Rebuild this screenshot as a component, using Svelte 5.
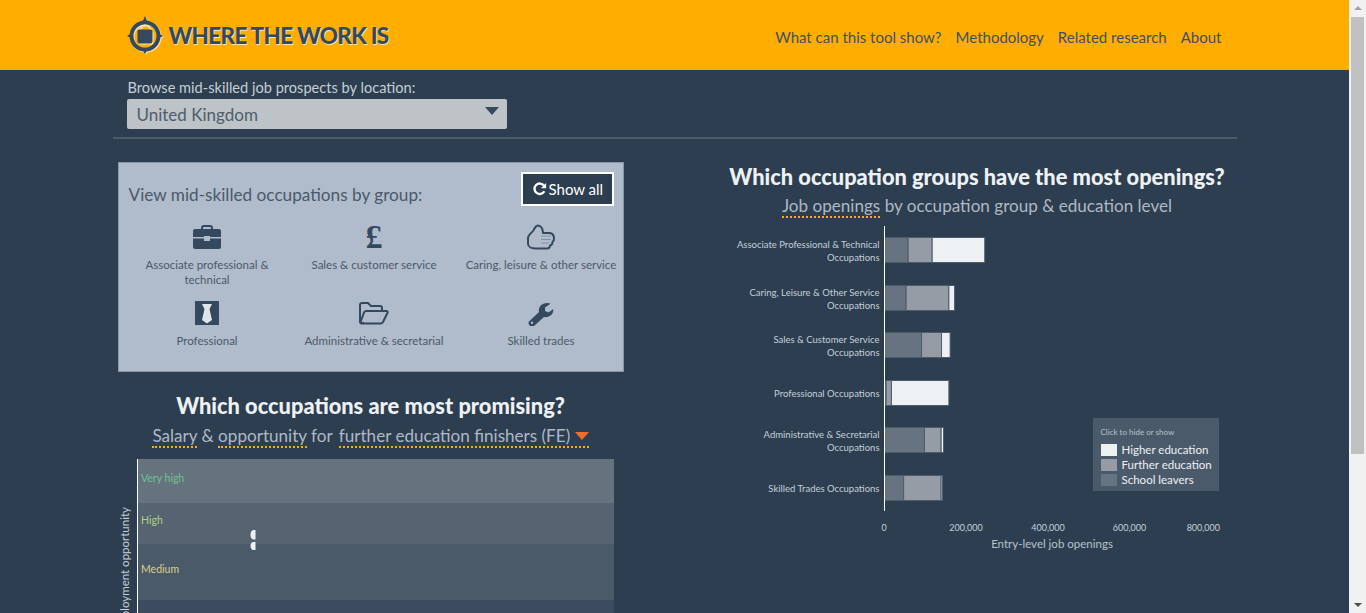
<script>
  const navLinks = ['What can this tool show?', 'Methodology', 'Related research', 'About'];

  const groups = [
    { id: 'briefcase', label: 'Associate professional & technical' },
    { id: 'pound', label: 'Sales & customer service' },
    { id: 'hand', label: 'Caring, leisure & other service' },
    { id: 'tie', label: 'Professional' },
    { id: 'folder', label: 'Administrative & secretarial' },
    { id: 'wrench', label: 'Skilled trades' }
  ];

  // values in thousands of openings, read off the axis
  const bars = [
    { lines: ['Associate Professional & Technical', 'Occupations'], y: 238, v: [58, 59, 129] },
    { lines: ['Caring, Leisure & Other Service', 'Occupations'], y: 286, v: [53, 105, 14] },
    { lines: ['Sales & Customer Service', 'Occupations'], y: 333, v: [91, 49, 21] },
    { lines: ['Professional Occupations'], y: 381, v: [4, 13, 141] },
    { lines: ['Administrative & Secretarial', 'Occupations'], y: 428, v: [98, 41, 6] },
    { lines: ['Skilled Trades Occupations'], y: 476, v: [47, 92, 3.5] }
  ];

  const segColors = ['#667380', '#959ca6', '#eef1f3'];
  const AXIS_X = 166.5;
  const SCALE = 0.4075;

  function segments(v) {
    let x = AXIS_X;
    return v.map((val, i) => {
      const seg = { x, w: val * SCALE, fill: segColors[i] };
      x += seg.w;
      return seg;
    });
  }

  const ticks = [
    { x: 166, label: '0', anchor: 'middle' },
    { x: 248, label: '200,000', anchor: 'middle' },
    { x: 330, label: '400,000', anchor: 'middle' },
    { x: 411.5, label: '600,000', anchor: 'middle' },
    { x: 502, label: '800,000', anchor: 'end' }
  ];

  const bands = [
    { y: 0, h: 44, fill: '#65737f', label: 'Very high', color: '#71c08f', ty: 23 },
    { y: 44, h: 41, fill: '#566472', label: 'High', color: '#b0cf84', ty: 65 },
    { y: 85, h: 56, fill: '#4a5a69', label: 'Medium', color: '#dcd08f', ty: 114 },
    { y: 141, h: 60, fill: '#3c4c5e', label: '', color: '', ty: 0 }
  ];

  const legend = [
    { label: 'Higher education', color: '#eef1f3' },
    { label: 'Further education', color: '#959ca6' },
    { label: 'School leavers', color: '#667380' }
  ];
</script>

<div class="window">
  <div class="page">
    <header class="topbar">
      <div class="container topbar-inner">
        <div class="brand">
          <svg class="logo" viewBox="0 0 36 38" width="36" height="38">
            <path d="M18 0l3.500 8h-7zM18 38l-3.500-6h7zM0 20l6-3.500v7zM36 20l-6-3.500v7z" fill="#34495e" />
            <circle cx="18" cy="20" r="13.500" fill="none" stroke="#34495e" stroke-width="4" />
            <path d="M12 15c1-4 3-6 6-6s5 2 6 6" fill="none" stroke="#efe7cf" stroke-width="1.200" />
            <rect x="10.500" y="13.500" width="15" height="14" rx="2" fill="#34495e" />
          </svg>
          <span class="brand-name">WHERE THE WORK IS</span>
        </div>
        <nav class="nav">
          {#each navLinks as link}
            <span>{link}</span>
          {/each}
        </nav>
      </div>
    </header>

    <div class="container">
      <section class="location">
        <div class="location-label">Browse mid-skilled job prospects by location:</div>
        <div class="select">
          <span>United Kingdom</span>
          <i class="select-caret"></i>
        </div>
      </section>
      <div class="rule"></div>

      <div class="columns">
        <div class="left">
          <section class="panel">
            <div class="panel-head">
              <h3>View mid-skilled occupations by group:</h3>
              <button class="show-all">
                <svg viewBox="0 0 16 16" width="14" height="14">
                  <path d="M13 10.600A6 6 0 1 1 12.600 4.200" fill="none" stroke="#fff" stroke-width="2.600" />
                  <path d="M15 1v6H9z" fill="#fff" />
                </svg>
                Show all
              </button>
            </div>
            <div class="groups">
              {#each groups as g}
                <div class="group">
                  <div class="group-icon">
                    {#if g.id === 'briefcase'}
                      <svg viewBox="0 0 28 24" width="28" height="24">
                        <path d="M9 5V3a2 2 0 0 1 2-2h6a2 2 0 0 1 2 2v2" fill="none" stroke="#34495e" stroke-width="2" />
                        <path d="M2 4h24a2 2 0 0 1 2 2v6H17v-1h-6v1H0V6a2 2 0 0 1 2-2z" fill="#34495e" />
                        <path d="M0 13.500h11V16h6v-2.500h11V22a2 2 0 0 1-2 2H2a2 2 0 0 1-2-2z" fill="#34495e" />
                      </svg>
                    {:else if g.id === 'pound'}
                      <span class="pound">£</span>
                    {:else if g.id === 'hand'}
                      <svg viewBox="0 0 28 26" width="28" height="26">
                        <path d="M9 24.500h11c2 0 3-1 3-3 1.500-.3 2.500-1.500 2.500-3.500 1-.8 1.500-2 1.500-3.500 0-3-1.500-5-4-5.500H16C16 5 14 1.500 11 1.500 8.500 1.500 8 4 6 7 4.500 9 1 11 1 14v6c0 3 4 4.500 8 4.500z" fill="none" stroke="#34495e" stroke-width="2" stroke-linejoin="round" />
                        <path d="M14 12h10M14 15.500h10M14 19h8" stroke="#8493a4" stroke-width="1.200" />
                      </svg>
                    {:else if g.id === 'tie'}
                      <svg viewBox="0 0 24 24" width="24" height="24">
                        <rect width="24" height="24" fill="#34495e" />
                        <path d="M7 3l10 0-2.500 5 2.500 11-5 3.500-5-3.500 2.500-11z" fill="#dfe5ea" />
                      </svg>
                    {:else if g.id === 'folder'}
                      <svg viewBox="0 0 30 23" width="30" height="23">
                        <path d="M5 21H3a2 2 0 0 1-2-2V3a2 2 0 0 1 2-2h6l3 3h9a2 2 0 0 1 2 2v3" fill="none" stroke="#34495e" stroke-width="2" />
                        <path d="M7 9h20.500c1 0 1.500 1 1 1.800L24 20a3 3 0 0 1-2.500 1.500H3c-1 0-2-.5-1.500-1.500L5 10.500A2.500 2.500 0 0 1 7 9z" fill="none" stroke="#34495e" stroke-width="2" stroke-linejoin="round" />
                      </svg>
                    {:else if g.id === 'wrench'}
                      <svg viewBox="0 0 26 25" width="26" height="25">
                        <path d="M1 20.500L11 11c-1-4 2-9 8-9 1.500 0 2.500.3 3.500.8L17 6.500v3.500l3.500 1.500 4.800-3.500c.5 5-3.800 9-9.300 8L6 25c-1.500 1-3 .8-4.300-.5C.5 23.200 0 21.800 1 20.500z" fill="#34495e" />
                        <circle cx="4" cy="21.800" r="1.200" fill="#b0bccb" />
                      </svg>
                    {/if}
                  </div>
                  <div class="group-label">{g.label}</div>
                </div>
              {/each}
            </div>
          </section>

          <h2 class="chart-title promising">Which occupations are most promising?</h2>
          <p class="chart-sub">
            <span class="dotted">Salary</span> &amp; <span class="dotted">opportunity</span> for
            <span class="dotted picker">further education finishers (FE) <i class="picker-caret"></i></span>
          </p>
          <svg class="scatter" width="501" height="201" viewBox="0 0 501 201">
            {#each bands as b}
              <rect x="24" y={b.y} width="477" height={b.h} fill={b.fill} />
              {#if b.label}
                <text x="28" y={b.ty} fill={b.color} class="band-label">{b.label}</text>
              {/if}
            {/each}
            <rect x="24" width="1" height="201" fill="#fff" />
            <text transform="translate(16 48) rotate(-90)" text-anchor="end" class="axis-title">Employment opportunity</text>
            <path d="M142.500 80.500h-2c-2 0-3-2.200-3-4.700s1-4.700 3-4.700h2z" fill="#eef1f3" />
            <path d="M142.500 91h-2c-2 0-3-2-3-4s1-4 3-4h2z" fill="#eef1f3" />
          </svg>
        </div>

        <div class="right">
          <h2 class="chart-title">Which occupation groups have the most openings?</h2>
          <p class="chart-sub">
            <span class="dotted">Job openings</span> by occupation group &amp; education level
          </p>
          <div class="bar-chart">
            <svg width="519" height="335" viewBox="0 0 519 335">
              {#each bars as row}
                {#each segments(row.v) as s}
                  <rect x={s.x} y={row.y - 226.5} width={s.w} height="25" fill={s.fill} stroke="#4d5c6c" />
                {/each}
                {#each row.lines as line, i}
                  <text
                    x="161.500"
                    y={row.y - 226 + (row.lines.length === 1 ? 16 : 10 + i * 13)}
                    text-anchor="end"
                    class="bar-label">{line}</text>
                {/each}
              {/each}
              <rect x="166" width="1" height="285" fill="#fff" />
              {#each ticks as t}
                <text x={t.x} y="305" text-anchor={t.anchor} class="tick">{t.label}</text>
              {/each}
              <text x="334" y="322" text-anchor="middle" class="x-title">Entry-level job openings</text>
            </svg>
            <div class="legend">
              <div class="legend-title">Click to hide or show</div>
              {#each legend as item}
                <div class="legend-row">
                  <i style="background: {item.color}"></i>
                  <span>{item.label}</span>
                </div>
              {/each}
            </div>
          </div>
        </div>
      </div>
    </div>
  </div>

  <div class="scrollbar">
    <i class="arrow up"></i>
    <div class="thumb"></div>
    <i class="arrow down"></i>
  </div>
</div>

<style>
  :global(body) {
    margin: 0;
    background: #2d3e50;
    overflow: hidden;
  }

  .window {
    display: flex;
    height: 613px;
    font-family: Lato, 'Noto Sans', sans-serif;
  }

  .page {
    flex: 1;
    min-width: 0;
    overflow: hidden;
    background: #2d3e50;
  }

  .container {
    width: 1124px;
    margin: 0 auto;
  }

  .topbar {
    height: 70px;
    background: #ffae00;
  }

  .topbar-inner {
    display: flex;
    align-items: center;
    justify-content: space-between;
    height: 100%;
  }

  .brand {
    display: flex;
    align-items: center;
    gap: 6px;
    margin-left: 14px;
  }

  .logo {
    filter: drop-shadow(1px 1px 0 #f4e6c4);
  }

  .brand-name {
    font-size: 22.500px;
    font-weight: 900;
    color: #34495e;
    text-shadow: 1px 1px 0 #f4e6c4;
    letter-spacing: -0.7px;
  }

  .nav {
    display: flex;
    gap: 14px;
    margin: 3px 15px 0 0;
    font-size: 15px;
    color: #3f5062;
  }

  .location {
    padding: 9px 0 0 15px;
  }

  .location-label {
    font-size: 14.600px;
    line-height: 18px;
    color: #c6ced6;
  }

  .select {
    display: flex;
    align-items: center;
    justify-content: space-between;
    box-sizing: border-box;
    width: 380px;
    height: 30px;
    margin: 2px 0 0 -1px;
    padding: 0 8px 0 10px;
    background: #bdc3c7;
    border-radius: 2px;
    font-size: 17px;
    color: #4e5d6c;
  }

  .select-caret {
    width: 0;
    height: 0;
    margin-top: -6px;
    border: 7px solid transparent;
    border-top: 8px solid #34495e;
    border-bottom: 0;
  }

  .rule {
    height: 2px;
    margin-top: 8px;
    background: #4a5a69;
  }

  .columns {
    display: grid;
    grid-template-columns: 516px 519px;
    column-gap: 89px;
    padding-top: 23px;
  }

  .panel {
    box-sizing: border-box;
    width: 506px;
    height: 210px;
    margin-left: 5px;
    padding: 9px 9px 0 9px;
    background: #b0bccb;
    border: 1px solid #8795a5;
  }

  .panel-head {
    display: flex;
    align-items: flex-start;
    justify-content: space-between;
  }

  .panel-head h3 {
    margin: 12px 0 0 1px;
    font-size: 17.200px;
    font-weight: 400;
    color: #4a596a;
  }

  .show-all {
    display: flex;
    align-items: center;
    gap: 2px;
    width: 93px;
    height: 34px;
    padding: 0 0 0 10px;
    background: #2d3e50;
    border: 2px solid #fff;
    color: #fff;
    font: inherit;
    font-size: 15px;
  }

  .groups {
    display: grid;
    grid-template-columns: repeat(3, 167px);
    margin: 17px 0 0 -4px;
  }

  .group {
    height: 76px;
    text-align: center;
  }

  .group-icon {
    display: flex;
    align-items: center;
    justify-content: center;
    height: 28px;
  }

  .pound {
    font-family: 'Liberation Serif', serif;
    font-size: 34px;
    font-weight: 700;
    line-height: 28px;
    color: #34495e;
  }

  .group-label {
    margin: 6px auto 0;
    max-width: 165px;
    font-size: 11.500px;
    line-height: 15px;
    color: #4a596a;
  }

  .chart-title {
    margin: 0;
    font-size: 21.800px;
    font-weight: 900;
    line-height: 27px;
    text-align: center;
    color: #eef1f3;
  }

  .promising {
    width: 506px;
    margin: 20px 0 0 5px;
  }

  .right {
    padding-top: 1px;
  }

  .chart-sub {
    margin: 4px 0 0;
    font-size: 17.100px;
    line-height: 24px;
    text-align: center;
    color: #adb9c5;
  }

  .left .chart-sub {
    width: 506px;
    margin: 5px 0 0 5px;
  }

  .dotted {
    border-bottom: 2px dotted #ffae00;
  }

  .picker {
    margin-left: 2px;
  }

  .picker-caret {
    display: inline-block;
    width: 0;
    height: 0;
    vertical-align: 2px;
    border: 7px solid transparent;
    border-top: 8px solid #f26c2a;
    border-bottom: 0;
  }

  .scatter {
    display: block;
    margin-top: 11px;
  }

  .band-label {
    font-size: 10.500px;
  }

  .axis-title {
    font-size: 11.500px;
    fill: #c6ced6;
  }

  .bar-chart {
    position: relative;
    margin-top: 8px;
  }

  .bar-chart svg {
    display: block;
  }

  .bar-label {
    font-size: 9.500px;
    fill: #c3d0dc;
  }

  .tick {
    font-size: 9px;
    fill: #c3d0dc;
  }

  .x-title {
    font-size: 11.500px;
    fill: #b6c2cd;
  }

  .legend {
    position: absolute;
    top: 192px;
    left: 375px;
    box-sizing: border-box;
    width: 126px;
    height: 73px;
    padding: 10px 8px 0;
    background: #4a5a6a;
  }

  .legend-title {
    margin-bottom: 5px;
    font-size: 8px;
    line-height: 9px;
    color: #b6c2cd;
  }

  .legend-row {
    display: flex;
    align-items: center;
    gap: 5px;
    height: 15px;
    font-size: 11.500px;
    white-space: nowrap;
    color: #eef1f3;
  }

  .legend-row i {
    flex: none;
    width: 16px;
    height: 12px;
  }

  .scrollbar {
    display: flex;
    flex: none;
    flex-direction: column;
    align-items: center;
    justify-content: space-between;
    box-sizing: border-box;
    width: 17px;
    height: 613px;
    padding: 6px 0;
    background: #f1f1f1;
    position: relative;
  }

  .thumb {
    position: absolute;
    top: 17px;
    left: 2px;
    width: 13px;
    height: 437px;
    background: #c1c1c1;
  }

  .arrow {
    width: 0;
    height: 0;
    border: 4px solid transparent;
  }

  .arrow.up {
    border-top: 0;
    border-bottom: 4px solid #a3a3a3;
  }

  .arrow.down {
    border-bottom: 0;
    border-top: 4px solid #505050;
  }
</style>
